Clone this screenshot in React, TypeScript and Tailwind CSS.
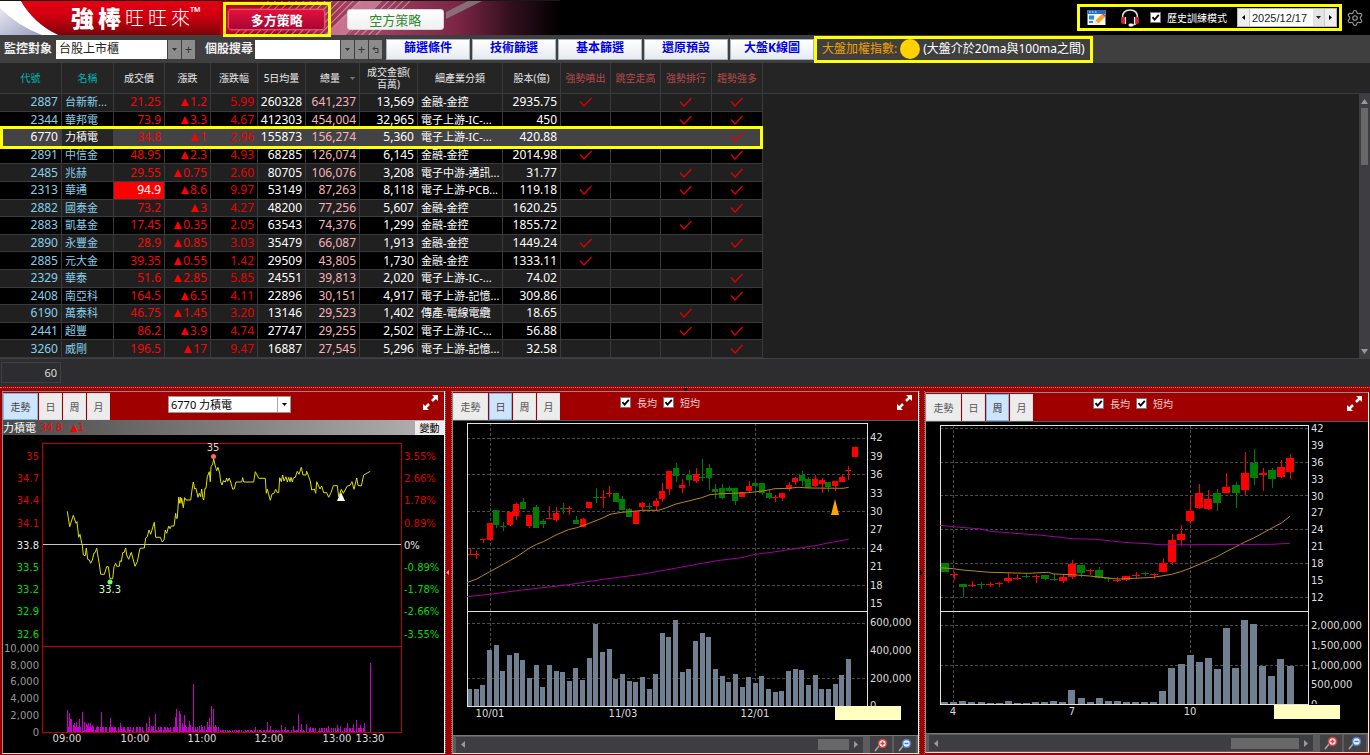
import React from "react";
import { Settings } from "lucide-react";

type Stock = {
  code: string;
  name: string;
  price: string;
  change: string;
  pct: string;
  avg5: string;
  volume: string;
  amount: string;
  sector: string;
  capital: string;
  flags: string;
  limitUp?: boolean;
  selected?: boolean;
};

// [high, body top, body bottom, low, 1 = up / 0 = down]
type Candle = [number, number, number, number, number];

// flags: one digit for each of the four signal columns
const stocks: Stock[] = [
  { code: "2887", name: "台新新...", price: "21.25", change: "1.2", pct: "5.99", avg5: "260328", volume: "641,237", amount: "13,569", sector: "金融-金控", capital: "2935.75", flags: "1011" },
  { code: "2344", name: "華邦電", price: "73.9", change: "3.3", pct: "4.67", avg5: "412303", volume: "454,004", amount: "32,965", sector: "電子上游-IC-...", capital: "450", flags: "0011" },
  { code: "6770", name: "力積電", price: "34.8", change: "1", pct: "2.96", avg5: "155873", volume: "156,274", amount: "5,360", sector: "電子上游-IC-...", capital: "420.88", flags: "0001", selected: true },
  { code: "2891", name: "中信金", price: "48.95", change: "2.3", pct: "4.93", avg5: "68285", volume: "126,074", amount: "6,145", sector: "金融-金控", capital: "2014.98", flags: "1001" },
  { code: "2485", name: "兆赫", price: "29.55", change: "0.75", pct: "2.60", avg5: "80705", volume: "106,076", amount: "3,208", sector: "電子中游-通訊...", capital: "31.77", flags: "0011" },
  { code: "2313", name: "華通", price: "94.9", change: "8.6", pct: "9.97", avg5: "53149", volume: "87,263", amount: "8,118", sector: "電子上游-PCB...", capital: "119.18", flags: "1011", limitUp: true },
  { code: "2882", name: "國泰金", price: "73.2", change: "3", pct: "4.27", avg5: "48200", volume: "77,256", amount: "5,607", sector: "金融-金控", capital: "1620.25", flags: "0001" },
  { code: "2883", name: "凱基金", price: "17.45", change: "0.35", pct: "2.05", avg5: "63543", volume: "74,376", amount: "1,299", sector: "金融-金控", capital: "1855.72", flags: "0010" },
  { code: "2890", name: "永豐金", price: "28.9", change: "0.85", pct: "3.03", avg5: "35479", volume: "66,087", amount: "1,913", sector: "金融-金控", capital: "1449.24", flags: "1001" },
  { code: "2885", name: "元大金", price: "39.35", change: "0.55", pct: "1.42", avg5: "29509", volume: "43,805", amount: "1,730", sector: "金融-金控", capital: "1333.11", flags: "1000" },
  { code: "2329", name: "華泰", price: "51.6", change: "2.85", pct: "5.85", avg5: "24551", volume: "39,813", amount: "2,020", sector: "電子上游-IC-...", capital: "74.02", flags: "0001" },
  { code: "2408", name: "南亞科", price: "164.5", change: "6.5", pct: "4.11", avg5: "22896", volume: "30,151", amount: "4,917", sector: "電子上游-記憶...", capital: "309.86", flags: "0001" },
  { code: "6190", name: "萬泰科", price: "46.75", change: "1.45", pct: "3.20", avg5: "13146", volume: "29,523", amount: "1,402", sector: "傳產-電線電纜", capital: "18.65", flags: "0010" },
  { code: "2441", name: "超豐", price: "86.2", change: "3.9", pct: "4.74", avg5: "27747", volume: "29,255", amount: "2,502", sector: "電子上游-IC-...", capital: "56.88", flags: "0011" },
  { code: "3260", name: "威剛", price: "196.5", change: "17", pct: "9.47", avg5: "16887", volume: "27,545", amount: "5,296", sector: "電子上游-記憶...", capital: "32.58", flags: "0001" },
];

// chart geometry below is stored at three units to one pixel
const U = 3;
const px = (v: number) => Math.round(v / U);
const toPoints = (s: string) =>
  s
    .split(" ")
    .map((p) => p.split(",").map((n) => (Number(n) / U).toFixed(1)).join(","))
    .join(" ");

const dayCandles: Candle[] = [
  [505, 521, 524, 524, 1], [514, 521, 524, 538, 1], [477, 478, 481, 489, 1], [430, 430, 479, 479, 1], [390, 390, 435, 444, 0],
  [425, 437, 440, 453, 0], [396, 396, 434, 438, 1], [368, 372, 408, 420, 1], [355, 365, 388, 388, 0], [405, 405, 438, 443, 1],
  [374, 380, 443, 443, 0], [418, 422, 433, 443, 0], [378, 415, 418, 418, 1], [380, 400, 420, 426, 1], [368, 383, 386, 403, 0],
  [378, 383, 386, 405, 1], [408, 420, 431, 431, 0], [414, 418, 440, 440, 1], [365, 365, 383, 383, 1], [325, 351, 354, 368, 0],
  [330, 350, 353, 385, 1], [318, 338, 341, 350, 1], [338, 338, 366, 366, 0], [348, 357, 390, 390, 0], [383, 388, 411, 411, 0],
  [393, 393, 431, 431, 1], [365, 370, 381, 390, 1], [370, 378, 382, 387, 0], [353, 362, 378, 392, 1], [310, 332, 358, 366, 1],
  [273, 273, 327, 345, 1], [250, 264, 288, 305, 0], [297, 315, 323, 340, 1], [270, 285, 300, 318, 0], [263, 282, 303, 310, 1],
  [237, 290, 293, 303, 0], [253, 264, 293, 330, 0], [313, 328, 336, 357, 0], [313, 325, 353, 357, 0], [317, 325, 332, 336, 0],
  [323, 323, 363, 375, 0], [335, 335, 351, 351, 1], [304, 318, 333, 340, 1], [302, 308, 317, 335, 0], [310, 310, 339, 345, 0],
  [330, 338, 353, 356, 0], [345, 352, 355, 367, 1], [338, 338, 353, 362, 1], [306, 316, 328, 333, 1], [290, 295, 307, 315, 1],
  [273, 285, 304, 317, 0], [290, 297, 323, 323, 0], [286, 297, 318, 322, 1], [295, 300, 311, 338, 1], [305, 305, 321, 335, 0],
  [303, 303, 318, 333, 1], [283, 290, 305, 305, 1], [258, 269, 272, 300, 1], [200, 200, 230, 230, 1],
];
const dayVolumes = [
  928, 928, 916, 811, 796, 874, 826, 818, 841, 893, 856, 921, 856, 874, 876, 904, 863, 901, 833, 733, 816, 808, 896, 881, 904,
  906, 891, 928, 881, 758, 770, 721, 877, 868, 783, 760, 770, 866, 888, 906, 883, 921, 891, 910, 888, 926, 936, 934, 874, 868,
  871, 916, 886, 926, 926, 913, 886, 838,
];
const dayShort =
  "65,608 95,597 134,575 175,553 215,530 255,503 275,493 295,485 333,465 370,449 395,443 433,430 475,413 495,403 530,397 575,393 590,391 640,391 660,385 690,373 770,353 795,344 830,341 910,338 960,332 990,326 1030,325 1060,322 1090,324 1195,325 1211,322";
const dayLong =
  "65,650 134,643 215,632 370,614 475,598 590,583 700,563 815,542 890,533 930,523 980,517 1110,497 1165,486 1211,478";

const weekCandles: Candle[] = [
  [549, 549, 576, 576, 0], [575, 582, 585, 600, 1], [612, 612, 621, 650, 0], [603, 615, 618, 622, 1], [607, 612, 615, 628, 0],
  [607, 613, 616, 620, 1], [605, 609, 612, 622, 1], [578, 594, 604, 608, 1], [585, 594, 597, 600, 1], [580, 588, 591, 594, 0],
  [586, 588, 591, 608, 1], [584, 586, 598, 600, 0], [583, 597, 600, 603, 0], [583, 591, 603, 608, 1], [540, 553, 591, 596, 1],
  [556, 556, 578, 591, 0], [566, 571, 574, 586, 1], [560, 571, 594, 594, 0], [592, 594, 597, 605, 0], [590, 600, 603, 606, 1],
  [588, 588, 600, 603, 1], [577, 585, 588, 594, 1], [575, 580, 583, 588, 0], [579, 583, 586, 597, 1], [534, 549, 576, 576, 1],
  [461, 479, 546, 556, 1], [436, 462, 480, 497, 1], [347, 393, 424, 432, 1], [313, 340, 384, 388, 1], [331, 356, 388, 390, 1],
  [326, 338, 368, 392, 0], [279, 321, 339, 339, 1], [306, 315, 338, 383, 0], [216, 279, 330, 347, 1], [206, 248, 295, 315, 0],
  [265, 279, 286, 333, 1], [264, 270, 297, 324, 0], [239, 262, 291, 294, 1], [223, 233, 275, 297, 1],
];
const weekVolumes = [
  966, 966, 962, 966, 966, 969, 969, 962, 968, 968, 966, 966, 962, 966, 931, 954, 966, 954, 964, 964, 966, 966, 966, 966, 934,
  863, 853, 826, 846, 833, 868, 743, 863, 721, 733, 858, 888, 838, 858,
];
const weekShort =
  "76,563 115,566 143,570 225,577 340,580 400,577 417,582 472,584 524,588 580,594 608,597 660,595 715,592 770,583 797,575 825,565 906,530 933,515 961,501 988,487 1016,474 1099,429 1125,409";
const weekLong =
  "76,436 115,440 198,447 226,454 300,460 380,466 472,476 540,478 640,488 700,491 735,494 825,494 1070,493 1125,490";

const tickLine =
  "202,394 209,440 220,406 228,430 231,425 236,472 240,463 245,490 247,495 250,525 256,527 259,504 263,538 268,540 272,550 277,540 282,519 286,517 290,504 295,535 298,552 302,583 313,583 320,560 325,560 330,596 338,596 342,560 347,550 350,559 358,559 360,542 364,545 368,518 373,517 377,504 380,525 386,538 394,517 405,559 412,545 420,505 433,504 437,474 442,470 447,450 452,463 463,427 467,472 481,472 487,486 492,480 496,450 500,460 506,438 510,446 514,438 522,438 527,400 529,415 532,415 536,352 538,370 541,352 543,370 545,355 550,383 554,353 558,360 572,360 576,330 580,306 584,327 588,325 594,352 598,340 602,350 605,327 608,352 611,360 615,325 618,325 622,290 628,275 631,305 633,260 638,252 641,237 645,255 650,272 654,262 659,280 662,305 666,315 670,302 676,306 680,294 683,304 688,294 692,306 698,328 703,326 708,306 725,306 728,293 731,306 761,306 766,275 776,295 796,295 799,340 802,328 811,361 816,342 822,340 827,328 831,337 836,338 839,293 844,305 848,285 852,303 858,290 862,306 866,292 870,305 873,292 877,306 880,294 886,292 892,274 897,283 904,262 909,285 918,285 920,274 931,303 935,330 943,327 947,340 950,305 960,327 965,318 971,338 980,338 986,352 993,338 1000,317 1012,317 1016,350 1024,328 1030,340 1042,318 1050,316 1056,305 1062,328 1070,294 1074,316 1084,318 1091,285 1111,274";

const tickSpikes: [number, number][] = [
  [202, 991], [206, 1000], [209, 1016], [213, 1017], [218, 1035], [222, 1030], [227, 1025], [236, 1016], [247, 996], [252, 1025],
  [257, 1033], [261, 1035], [265, 1030], [270, 1028], [276, 1035], [292, 1038], [302, 996], [308, 1040], [318, 1040], [329, 1014],
  [338, 1043], [359, 1030], [368, 1040], [437, 1030], [447, 1011], [454, 1038], [459, 1038], [464, 1001], [492, 1040], [505, 1043],
  [524, 1010], [529, 986], [536, 994], [541, 1003], [546, 1028], [551, 1006], [556, 1035], [566, 1023], [571, 1035], [580, 913],
  [597, 1038], [602, 1035], [612, 1038], [620, 1026], [627, 1015], [632, 979], [640, 988], [646, 1035], [654, 1040], [766, 1040],
  [800, 1026], [810, 1038], [844, 1036], [856, 1040], [878, 1038], [895, 1003], [904, 1032], [919, 1033], [930, 1040], [985, 1038],
  [1012, 1036], [1020, 1038], [1042, 1030], [1058, 1033], [1069, 1019], [1080, 1035], [1091, 1028], [1111, 848],
];

const CheckMark = () => (
  <svg width="14" height="10" viewBox="0 0 14 10" className="mx-auto block">
    <path d="M1 4.5 5 9 12.5 1" fill="none" stroke="#e00000" strokeWidth="1.2" />
  </svg>
);

const Caret = () => (
  <svg width="5" height="3" viewBox="0 0 5 3" fill="currentColor">
    <path d="M0 0h5L2.500 3z" />
  </svg>
);

const UpArrow = () => (
  <svg width="8" height="8" viewBox="0 0 8 8" className="mr-px inline-block align-baseline">
    <path d="M0 8h8L4 0z" fill="#ff0000" />
  </svg>
);

const Tick = ({ id, text, labelClass }: { id: string; text: string; labelClass: string }) => (
  <div className="flex items-center gap-1.5">
    <span className="grid">
      <input
        id={id}
        type="checkbox"
        defaultChecked
        className="col-start-1 row-start-1 size-[11px] appearance-none border border-[#777] bg-white"
      />
      <svg viewBox="0 0 11 11" className="pointer-events-none col-start-1 row-start-1 size-[11px]">
        <path d="M2.500 5.200 4.600 7.600 8.800 2.800" fill="none" stroke="#000" strokeWidth="1.800" />
      </svg>
    </span>
    <label htmlFor={id} className={labelClass}>
      {text}
    </label>
  </div>
);

const HeaderArt = () => (
  <svg width="560" height="35" viewBox="0 0 560 35" className="absolute left-0 top-0">
    <defs>
      <linearGradient id="red" x1="0" y1="0" x2="0" y2="1">
        <stop offset="0" stopColor="#e60012" />
        <stop offset="0.45" stopColor="#cf0010" />
        <stop offset="1" stopColor="#7d0508" />
      </linearGradient>
      <linearGradient id="plum" x1="0" y1="0" x2="1" y2="0">
        <stop offset="0" stopColor="#c0000f" />
        <stop offset="0.2" stopColor="#8c0a20" />
        <stop offset="0.4" stopColor="#a8486a" />
        <stop offset="0.7" stopColor="#7c2545" />
        <stop offset="0.85" stopColor="#35101f" />
        <stop offset="1" stopColor="#000" />
      </linearGradient>
      <linearGradient id="silver" x1="0" y1="0" x2="1" y2="1">
        <stop offset="0" stopColor="#f4f4fa" />
        <stop offset="1" stopColor="#8c90b4" />
      </linearGradient>
      <pattern id="hatch" width="5" height="5" patternUnits="userSpaceOnUse" patternTransform="rotate(45)">
        <rect width="1" height="5" fill="#fff" opacity="0.45" />
      </pattern>
    </defs>
    <rect x="20" width="220" height="35" fill="url(#red)" />
    <rect x="220" width="340" height="35" fill="url(#plum)" />
    <path d="M268 0h94l-36 35h-98z" fill="url(#hatch)" />
    <path d="M380 0h32l-34 35h-30z" fill="url(#hatch)" />
    <path d="M360 0h22l-36 35h-22z" fill="#d78aa6" opacity="0.7" />
    <path d="M446 12 470 0h14l-38 19z" fill="#8c8084" opacity="0.8" />
    <path d="M0 0h20Q34 24 58 35H0z" fill="url(#silver)" />
    <path d="M4 0h16Q34 24 58 35H42Q18 26 0 8V0z" fill="#fff" />
    <rect width="560" height="1" fill="#1c1512" />
  </svg>
);

const Header = () => (
  <header className="relative flex h-[35px] items-center bg-black">
    <HeaderArt />
    <h1 className="relative flex items-center pl-[71px] text-white">
      <span className="flex gap-1 text-[23px] leading-[28px] font-black">
        <span>強</span>
        <span>棒</span>
      </span>
      <span className="ml-1 flex gap-1 text-[19px] leading-[28px] font-light">
        <span>旺</span>
        <span>旺</span>
        <span>來</span>
      </span>
      <span className="mb-3 text-[14px] leading-[14px]">™</span>
    </h1>
    <nav className="relative flex flex-1 items-center">
      <div className="z-10 mt-1 ml-[25px] flex h-[29px] w-[102px] shrink-0 items-center justify-center outline-3 outline-[#ffff00]">
        <button className="h-[21px] w-[97px] rounded-[3px] border border-[#e8506e] bg-gradient-to-b from-[#e4103c] to-[#a80634] text-[13px] leading-[18px] font-bold text-white shadow-[0_0_3px_#f06080]">
          多方策略
        </button>
      </div>
      <button className="mt-1 ml-[19px] h-[21px] w-[97px] shrink-0 rounded-[3px] border border-[#d8d8d8] bg-gradient-to-b from-white to-[#f0f0f0] text-[13px] leading-[18px] text-[#2c8a2c]">
        空方策略
      </button>
      <div className="mr-1 ml-auto flex h-[27px] shrink-0 items-center border-3 border-[#ffff00] pr-0.5 pl-[7px]">
        <button aria-label="編輯版面">
          <svg width="19" height="17" viewBox="0 0 19 17">
            <rect x="0.500" y="1" width="18" height="15" fill="#f4f8fc" />
            <rect x="0.500" y="1" width="18" height="4" fill="#1f6fc4" />
            <path d="M2 3h1.500M5 3h1.500M8 3h1.500" stroke="#fff" strokeWidth="1" />
            <path d="M2 8.500h5" stroke="#2c86dc" strokeWidth="4" />
            <path d="M2 13h4" stroke="#2c86dc" strokeWidth="2" />
            <path d="m8 15 1-4 6-6 3 3-6 6z" fill="#f5a623" />
            <path d="m15 5 1-1 3 3-1 1z" fill="#d8343c" />
            <path d="m8 15 1-3 2 2z" fill="#fff" />
          </svg>
        </button>
        <button aria-label="客服" className="ml-3.5">
          <svg width="20" height="18" viewBox="0 0 20 18" fill="none">
            <path d="M2.500 9C2 4 5 1 10 1s8 3 7.500 8" stroke="#e4e4e4" strokeWidth="1.600" />
            <path d="M17 12c0 3-2 4-5 4" stroke="#ddd" strokeWidth="1.200" />
            <rect x="1" y="8" width="4.500" height="7" rx="2" fill="#d4202c" />
            <rect x="14.500" y="8" width="4.500" height="7" rx="2" fill="#d4202c" />
            <path d="M5.500 8v7M14.500 8v7" stroke="#eee" strokeWidth="1.200" />
            <rect x="8.500" y="14.500" width="5" height="3" rx="1.500" fill="#f0f0f0" />
          </svg>
        </button>
        <div className="ml-2.5">
          <Tick id="history" text="歷史訓練模式" labelClass="text-[10px] leading-[14px] text-white" />
        </div>
        <div className="ml-2.5 flex h-[19px] w-[100px] items-center border border-[#bbb] bg-white text-[#222]">
          <button aria-label="前一日" className="flex h-full w-[12px] items-center justify-center border-r border-[#ccc] bg-[#eee]">
            <svg width="3" height="5" viewBox="0 0 3 5"><path d="M3 0v5L0 2.500z" /></svg>
          </button>
          <input
            aria-label="日期"
            defaultValue="2025/12/17"
            className="h-full w-[60px] min-w-0 flex-1 pl-0.5 font-['Liberation_Sans'] text-[11px] leading-[16px] outline-none"
          />
          <button aria-label="選擇日期" className="flex h-full w-[11px] items-center justify-center bg-[#e4e4e4]">
            <Caret />
          </button>
          <button aria-label="後一日" className="flex h-full w-[12px] items-center justify-center border-l border-[#ccc] bg-[#eee]">
            <svg width="3" height="5" viewBox="0 0 3 5"><path d="M0 0v5L3 2.500z" /></svg>
          </button>
        </div>
      </div>
      <button aria-label="設定" className="mr-1.5 shrink-0 text-[#9a9a9a]">
        <Settings size={18} strokeWidth={1.5} />
      </button>
    </nav>
  </header>
);

const squareButton = "flex h-[19px] w-[13px] items-center justify-center bg-[#8c8c8c] text-[#333] text-[13px] leading-[13px]";

const Toolbar = () => (
  <div className="flex h-7 items-center bg-[#3f3f3f] pl-1 text-[12px] leading-[16px]">
    <label htmlFor="watch" className="w-[52px] font-bold text-[#f0f0f0]">監控對象</label>
    <div className="flex h-[19px] gap-px">
      <select id="watch" className="h-full w-[111px] appearance-none bg-white px-[3px] text-[12px] leading-[16px] text-[#222]">
        <option>台股上市櫃</option>
      </select>
      <span className={squareButton}><Caret /></span>
      <button aria-label="新增對象" className={squareButton}>+</button>
    </div>
    <label htmlFor="search" className="ml-[10px] w-[50px] font-bold text-[#f0f0f0]">個股搜尋</label>
    <div className="flex h-[19px] gap-px">
      <input id="search" className="h-full w-[85px] bg-white px-1 text-black outline-none" />
      <span className={squareButton}><Caret /></span>
      <button aria-label="加入" className={squareButton}>+</button>
      <button aria-label="返回" className={squareButton}>
        <svg width="7" height="7" viewBox="0 0 7 7" fill="none" stroke="currentColor"><path d="M3 .5 1 2.500l2 2M1 2.500h5v4H3" /></svg>
      </button>
    </div>
    <div className="ml-1 flex gap-0.5">
      {["篩選條件", "技術篩選", "基本篩選", "還原預設", "大盤K線圖"].map((t) => (
        <button key={t} className="h-[21px] w-[84px] border border-[#a9b4c0] bg-gradient-to-b from-white to-[#e6ebf0] pb-0.5 text-[12px] leading-[16px] font-bold text-[#0000e6]">
          {t}
        </button>
      ))}
    </div>
    <p className="flex h-[27px] items-center border-3 border-[#ffff00] px-[5px] text-white">
      <span className="text-[#f0a000]">大盤加權指數:</span>
      <span className="mx-[3px] size-[20px] rounded-full bg-[#ffd200]" />
      <span>(大盤介於20ma與100ma之間)</span>
    </p>
  </div>
);

const columns: [string, string, string][] = [
  ["代號", "w-[62px]", "text-[#00b4b4]"],
  ["名稱", "w-[52px]", "text-[#00b4b4]"],
  ["成交價", "w-[51px]", "text-[#e8e8e8]"],
  ["漲跌", "w-[46px]", "text-[#e8e8e8]"],
  ["漲跌幅", "w-[47px]", "text-[#e8e8e8]"],
  ["5日均量", "w-[48px]", "text-[#e8e8e8]"],
  ["總量", "w-[54px]", "text-[#e8e8e8]"],
  ["成交金額(百萬)", "w-[58px]", "text-[#e8e8e8]"],
  ["細產業分類", "w-[85px]", "text-[#e8e8e8]"],
  ["股本(億)", "w-[58px]", "text-[#e8e8e8]"],
  ["強勢噴出", "w-[50px]", "text-[#b84a4a]"],
  ["跳空走高", "w-[50px]", "text-[#b84a4a]"],
  ["強勢排行", "w-[51px]", "text-[#b84a4a]"],
  ["趨勢強多", "w-[51px]", "text-[#b84a4a]"],
];

const HeadTitle = ({ title }: { title: string }) => {
  if (title === "總量") {
    return (
      <span className="flex items-center justify-end gap-2.5 pr-1">
        {title}
        <span className="text-[#777]"><Caret /></span>
      </span>
    );
  }
  if (title.startsWith("成交金額")) {
    return (
      <>
        成交金額(
        <br />
        百萬)
      </>
    );
  }
  return <>{title}</>;
};

const StockRow = ({ s, dark }: { s: Stock; dark: boolean }) => {
  const line = s.selected ? "border-[#434346]" : "border-[#3a3a3e]";
  const num = `border-r border-b p-0 pr-[3px] text-right ${line}`;
  return (
    <tr className={s.selected ? "bg-[#434346]" : dark ? "bg-black" : "bg-[#202020]"}>
      <td className={`${num} relative ${s.selected ? "text-white" : "text-[#87ceeb]"}`}>
        {s.selected && (
          <span className="pointer-events-none absolute -top-[3px] -bottom-[3px] left-0 z-10 w-[763px] border-3 border-[#ffff00]" />
        )}
        {s.code}
      </td>
      <td className={`border-r border-b p-0 pl-[3px] text-[11px] ${line} ${s.selected ? "bg-[#262626] text-white" : "text-[#87ceeb]"}`}>{s.name}</td>
      <td className={`${num} ${s.limitUp ? "bg-[#ff0000] text-white" : "text-[#f40808]"}`}>{s.price}</td>
      <td className={`${num} text-[#f40808]`}>
        <UpArrow />
        {s.change}
      </td>
      <td className={`${num} text-[#e80000]`}>{s.pct}</td>
      <td className={`${num} text-white`}>{s.avg5}</td>
      <td className={`${num} text-[#f5b4bc]`}>{s.volume}</td>
      <td className={`${num} text-white`}>{s.amount}</td>
      <td className={`border-r border-b p-0 pl-[3px] text-[11px] text-white ${line}`}>{s.sector}</td>
      <td className={`${num} text-white`}>{s.capital}</td>
      {s.flags.split("").map((f, i) => (
        <td key={i} className={`border-r border-b p-0 ${line}`}>{f === "1" && <CheckMark />}</td>
      ))}
    </tr>
  );
};

const StockTable = () => (
  <section className="flex border-b border-[#3f3f46] bg-[#202020]">
    <table className="h-[295px] w-[763px] shrink-0 table-fixed border-separate border-spacing-0 text-[12px] leading-[16px] whitespace-nowrap">
      <colgroup>
        {columns.map(([title, width]) => (
          <col key={title} className={width} />
        ))}
      </colgroup>
      <thead>
        <tr className="h-[31px] bg-[#252526]">
          {columns.map(([title, , color]) => (
            <th key={title} className={`border-r border-b border-[#3a3a3e] p-0 text-center text-[10px] leading-[12px] font-normal ${color}`}>
              <HeadTitle title={title} />
            </th>
          ))}
        </tr>
      </thead>
      <tbody>
        {stocks.map((s, i) => (
          <StockRow key={s.code} s={s} dark={i % 2 === 1} />
        ))}
      </tbody>
    </table>
    <div className="flex flex-1 flex-col">
      <div className="h-[31px] border-b border-[#3a3a3e] bg-[#252526]" />
      <div className="flex w-[11px] flex-1 flex-col items-center gap-1 self-end bg-[#3e3e42] pt-[5px]">
        <svg width="7" height="5" viewBox="0 0 7 5"><path d="M0 5h7L3.500 0z" fill="#999" /></svg>
        <div className="h-[57px] w-[7px] bg-[#686868]" />
        <svg width="7" height="5" viewBox="0 0 7 5" className="mt-auto mb-1"><path d="M0 0h7L3.500 5z" fill="#999" /></svg>
      </div>
    </div>
  </section>
);

const Tabs = ({ active }: { active: string }) => (
  <div className="flex h-[27px] gap-px self-end">
    {["走勢", "日", "周", "月"].map((t, i) => (
      <button
        key={t}
        className={`border text-[10px] leading-[16px] ${i === 0 ? "w-[35px]" : "w-[23px]"} ${
          t === active ? "border-[#7ab8ee] bg-[#cde4fa] text-[#444]" : "border-[#e0e0e0] bg-[#ececec] text-[#555]"
        }`}
      >
        {t}
      </button>
    ))}
  </div>
);

const Expand = () => (
  <button aria-label="放大" className="mr-[6px] ml-auto self-start pt-[3px] text-white">
    <svg width="15" height="15" viewBox="0 0 15 15" fill="currentColor">
      <path d="M9 0h6v6l-2.100-2.100-3 3-1.800-1.800 3-3zM0 9l2.100 2.100 3-3 1.800 1.800-3 3L6 15H0z" />
    </svg>
  </button>
);

const Zoom = ({ sign, color }: { sign: string; color: string }) => (
  <button aria-label={sign === "+" ? "放大圖表" : "縮小圖表"} className="flex h-[17px] w-[22px] items-center justify-center bg-[#424245]">
    <svg width="14" height="14" viewBox="0 0 14 14">
      <path d="m1 13 4-5" stroke="#aaa" strokeWidth="1.500" />
      <circle cx="8.500" cy="5.500" r="4" fill="#e8eef4" stroke={color} strokeWidth="1.600" />
      <path d={sign === "+" ? "M6.500 5.500h4M8.500 3.500v4" : "M6.500 5.500h4"} stroke={color} strokeWidth="1.400" />
    </svg>
  </button>
);

const ChartScroll = ({ thumb }: { thumb: string }) => (
  <div className="flex flex-1 items-center gap-0.5 border-t border-[#777] bg-[#5c5c5e] pr-0.5 pl-[3px]">
    <div className="mr-[5px] flex h-[16px] flex-1 items-center bg-[#3e3e42] px-[5px]">
      <svg width="4" height="7" viewBox="0 0 4 7"><path d="M4 0v7L0 3.500z" fill="#999" /></svg>
      <div className={`mr-[5px] ml-auto h-[11px] bg-[#686868] ${thumb}`} />
      <svg width="4" height="7" viewBox="0 0 4 7"><path d="M0 0v7l4-3.500z" fill="#999" /></svg>
    </div>
    <Zoom sign="+" color="#d83a3a" />
    <Zoom sign="-" color="#4a7cc4" />
  </div>
);

const chartFont = "font-['DejaVu_Sans'] text-[10px]";

type KLineProps = {
  viewBox: string;
  candles: Candle[];
  volumes: number[];
  first: number;
  pitch: number;
  bodyWidth: number;
  barWidth: number;
  frame: { left: number; right: number; top: number; mid: number; bottom: number };
  gridY: number[];
  gridX: [number, string][];
  extraX: [number, string][];
  prices: { from: number; step: number; count: number };
  volumeLabels: [number, string][];
  shortLine: string;
  longLine: string;
  tip: [number, number];
  children?: React.ReactNode;
};

const KLine = (p: KLineProps) => {
  const { left, right, top, mid, bottom } = p.frame;
  return (
    <svg viewBox={p.viewBox} className={`block w-full bg-black ${chartFont}`}>
      <g stroke="#4a4a4a" strokeDasharray="3 2" shapeRendering="crispEdges">
        {p.gridY.map((y) => (
          <line key={y} x1={px(left)} x2={px(right)} y1={px(y)} y2={px(y)} />
        ))}
        {p.gridX.map(([x]) => (
          <line key={x} x1={px(x)} x2={px(x)} y1={px(top)} y2={px(bottom)} />
        ))}
      </g>
      <g shapeRendering="crispEdges">
        {p.volumes.map((v, i) => (
          <rect
            key={i}
            x={(p.first + i * p.pitch) / U - p.barWidth / 2}
            y={px(v)}
            width={p.barWidth}
            height={px(bottom) - px(v)}
            fill="#708090"
          />
        ))}
        {p.candles.map(([high, open, close, low, up], i) => {
          const x = Math.round((p.first + i * p.pitch) / U);
          return (
            <g key={i} fill={up ? "#ff0000" : "#007d00"}>
              <rect x={x} y={px(high)} width="1" height={Math.max(1, px(low) - px(high))} />
              <rect x={x - p.bodyWidth / 2} y={px(open)} width={p.bodyWidth} height={Math.max(1, px(close) - px(open))} />
            </g>
          );
        })}
        <path
          d={`M${px(left)} ${px(top)}H${px(right)}V${px(bottom)}H${px(left)}zM${px(left)} ${px(mid)}H${px(right)}`}
          fill="none"
          stroke="#e0e0e0"
        />
      </g>
      <polyline points={toPoints(p.shortLine)} fill="none" stroke="#b8861a" />
      <polyline points={toPoints(p.longLine)} fill="none" stroke="#a000a0" />
      {p.children}
      <g fill="#dcdcdc">
        {Array.from({ length: p.prices.count }, (_, i) => (
          <text key={i} x={px(right) + 3} y={px(p.prices.from + i * p.prices.step) + 4}>
            {42 - i * 3}
          </text>
        ))}
        {p.volumeLabels.map(([y, label]) => (
          <text key={label} x={px(right) + 3} y={px(y) + 4}>
            {label}
          </text>
        ))}
        <rect x={px(right) + 1} y={px(bottom)} width="20" height="8" fill="#000" />
        {[...p.gridX, ...p.extraX].map(([x, label]) => (
          <text key={label} x={px(x)} y={px(bottom) + 11} textAnchor="middle">
            {label}
          </text>
        ))}
      </g>
      <rect x={px(p.tip[0])} y={px(p.tip[1])} width="66" height="14" fill="#ffffc0" />
    </svg>
  );
};

const leftPrices = ["35", "34.7", "34.4", "34.1", "33.8", "33.5", "33.2", "32.9", "32.6"];
const rightPercents = ["3.55%", "2.66%", "1.78%", "0.89%", "0%", "-0.89%", "-1.78%", "-2.66%", "-3.55%"];
const times: [number, string][] = [[202, "09:00"], [405, "10:00"], [605, "11:00"], [808, "12:00"], [1011, "13:00"], [1111, "13:30"]];

const levelColor = (i: number) => (i < 4 ? "#dc0000" : i === 4 ? "#e8e8e8" : "#00dc00");

const Intraday = () => (
  <svg viewBox="3 55 441 318" className={`block w-full bg-black ${chartFont}`}>
    <g shapeRendering="crispEdges">
      {/* quiet minutes between the spikes */}
      {Array.from({ length: 264 }, (_, i) => {
        const busy = i < 136 ? 5 : i > 210 ? 4 : 2;
        const h = (i * 7 + i * i * 3) % 11 > 6 ? busy : (i * 5) % (i < 136 ? 3 : 2);
        return <rect key={i} x={67 + Math.round(i * 1.124)} y={352 - h} width="1" height={h} fill="#c800c8" />;
      })}
      {tickSpikes.map(([x, y]) => (
        <rect key={x} x={px(x)} y={px(y)} width="1" height={352 - px(y)} fill="#c800c8" />
      ))}
      <path d="M42 63H401V352H42zM42 266H401" transform="translate(.5 .5)" fill="none" stroke="#c00000" />
      <path d="M43 164.500H401" stroke="#c8c8c8" />
    </g>
    <polyline points={toPoints(tickLine)} fill="none" stroke="#e0e000" />
    <circle cx="213.500" cy="76.500" r="2.500" fill="#ff6a6a" />
    <circle cx="110" cy="202" r="2.500" fill="#6aff6a" />
    <path d="M341 112l4 9h-8z" fill="#fff" />
    <text x="213" y="71" textAnchor="middle" fill="#ffc8c8">35</text>
    <text x="110" y="213" textAnchor="middle" fill="#c8ffc8">33.3</text>
    {leftPrices.map((t, i) => (
      <text key={t} x="39" y={80 + Math.round(i * 22.2)} textAnchor="end" fill={levelColor(i)}>{t}</text>
    ))}
    {rightPercents.map((t, i) => (
      <text key={t} x="404" y={80 + Math.round(i * 22.2)} fill={levelColor(i)}>{t}</text>
    ))}
    {["10,000", "8,000", "6,000", "4,000", "2,000", "0"].map((t, i) => (
      <text key={t} x="39" y={272 + Math.round(i * 16.7)} textAnchor="end" fill="#999">{t}</text>
    ))}
    {times.map(([x, t]) => (
      <text key={t} x={px(x)} y="362" textAnchor="middle" fill="#dcdcdc">{t}</text>
    ))}
  </svg>
);

const AverageToggles = ({ id }: { id: string }) => (
  <div className="mb-[7px] ml-[60px] flex items-center gap-1.5">
    <Tick id={`${id}-long`} text="長均" labelClass="text-[10px] leading-[14px] text-[#f0d0d0]" />
    <Tick id={`${id}-short`} text="短均" labelClass="text-[10px] leading-[14px] text-[#f0d0d0]" />
  </div>
);

const panel = "flex flex-col border border-t-[#8c8c8c] border-r-white border-b-[#ddd] border-l-[#8c8c8c]";
const bar = "flex h-7 items-center bg-[#a00000]";

const App = () => {
  return (
    <div className="flex min-h-screen flex-col bg-[#2d2d30] font-['Noto_Sans','Noto_Sans_CJK_TC',sans-serif]">
      <Header />
      <Toolbar />
      <StockTable />
      <footer className="flex h-[27px] items-center bg-[#2d2d30] pl-px">
        <output className="h-[21px] w-[60px] border border-[#3f3f46] pr-[3px] text-right text-[11px] leading-[19px] text-[#ddd]">60</output>
      </footer>
      <div className="flex flex-1 flex-col bg-[#a00000]">
        <div className="flex h-[5px] flex-col items-center pt-px">
          <div className="w-full border-t border-dotted border-[#d88080]" />
          <svg width="5" height="3" viewBox="0 0 5 3"><path d="M0 0h5L2.500 3z" /></svg>
        </div>
        <main className="grid flex-1 grid-cols-[443fr_7px_467fr_6px_444fr] pr-px pb-px pl-0.5">
          <section className={panel}>
            <div className={bar}>
              <Tabs active="走勢" />
              <div className="mb-1 ml-[58px] flex h-[17px] border border-[#999] bg-white">
                <select aria-label="個股" className="w-[108px] appearance-none bg-white px-0.5 text-[11px] leading-[15px] text-black">
                  <option>6770 力積電</option>
                </select>
                <span className="flex w-[13px] items-center justify-center border-l border-[#aaa] text-black"><Caret /></span>
              </div>
              <Expand />
            </div>
            <div className="flex h-[15px] items-center bg-gradient-to-r from-[#4a4a4a] to-[#b4b4b4] text-[11px] leading-[15px]">
              <span className="text-white">力積電</span>
              <span className={`ml-1 text-[#ff0000] ${chartFont}`}>34.8</span>
              <span className={`ml-2 text-[#ff0000] ${chartFont}`}>▲1</span>
              <button className="ml-auto h-[14px] w-[29px] bg-[#ececec] text-[10px] leading-[14px] text-black">變動</button>
            </div>
            <Intraday />
          </section>
          <div className="flex items-center border-x border-dotted border-[#c06060]">
            <svg width="3" height="5" viewBox="0 0 3 5"><path d="M3 0v5L0 2.500z" fill="#ff8c8c" /></svg>
          </div>
          <section className={panel}>
            <div className={bar}>
              <Tabs active="日" />
              <AverageToggles id="day" />
              <Expand />
            </div>
            <div className="h-px bg-[#5a5a5a]" />
            <KLine
              viewBox="8 41 465 314"
              candles={dayCandles}
              volumes={dayVolumes}
              first={74}
              pitch={19.93}
              bodyWidth={6}
              barWidth={5}
              frame={{ left: 65, right: 1265, top: 130, mid: 694, bottom: 978 }}
              gridY={[173, 283, 394, 505, 615, 728, 895]}
              gridX={[[134, "10/01"], [931, "12/01"]]}
              extraX={[[534, "11/03"]]}
              prices={{ from: 172, step: 55.2, count: 10 }}
              volumeLabels={[[727, "600,000"], [809, "400,000"], [894, "200,000"], [976, "0"]]}
              shortLine={dayShort}
              longLine={dayLong}
              tip={[1170, 979]}
            >
              <path d="M390 119l4 16h-8z" fill="#ffa500" />
            </KLine>
            <ChartScroll thumb="w-[31px]" />
          </section>
          <div className="flex items-center border-x border-dotted border-[#c06060]">
            <svg width="3" height="5" viewBox="0 0 3 5"><path d="M0 0v5l3-2.500z" /></svg>
          </div>
          <section className={`${panel} mt-px mb-px`}>
            <div className={bar}>
              <Tabs active="周" />
              <AverageToggles id="week" />
              <Expand />
            </div>
            <div className="h-px bg-[#5a5a5a]" />
            <KLine
              viewBox="11 42 442 311"
              candles={weekCandles}
              volumes={weekVolumes}
              first={89}
              pitch={27.27}
              bodyWidth={8}
              barWidth={7}
              frame={{ left: 76, right: 1178, top: 136, mid: 694, bottom: 972 }}
              gridY={[145, 246, 346, 448, 549, 650, 736, 856]}
              gridX={[[115, "4"], [825, "10"]]}
              extraX={[[472, "7"]]}
              prices={{ from: 145, step: 50.45, count: 11 }}
              volumeLabels={[[735, "2,000,000"], [795, "1,500,000"], [855, "1,000,000"], [912, "500,000"], [972, "0"]]}
              shortLine={weekShort}
              longLine={weekLong}
              tip={[1078, 974]}
            />
            <ChartScroll thumb="w-[68px]" />
          </section>
        </main>
      </div>
    </div>
  );
};

export default App;
